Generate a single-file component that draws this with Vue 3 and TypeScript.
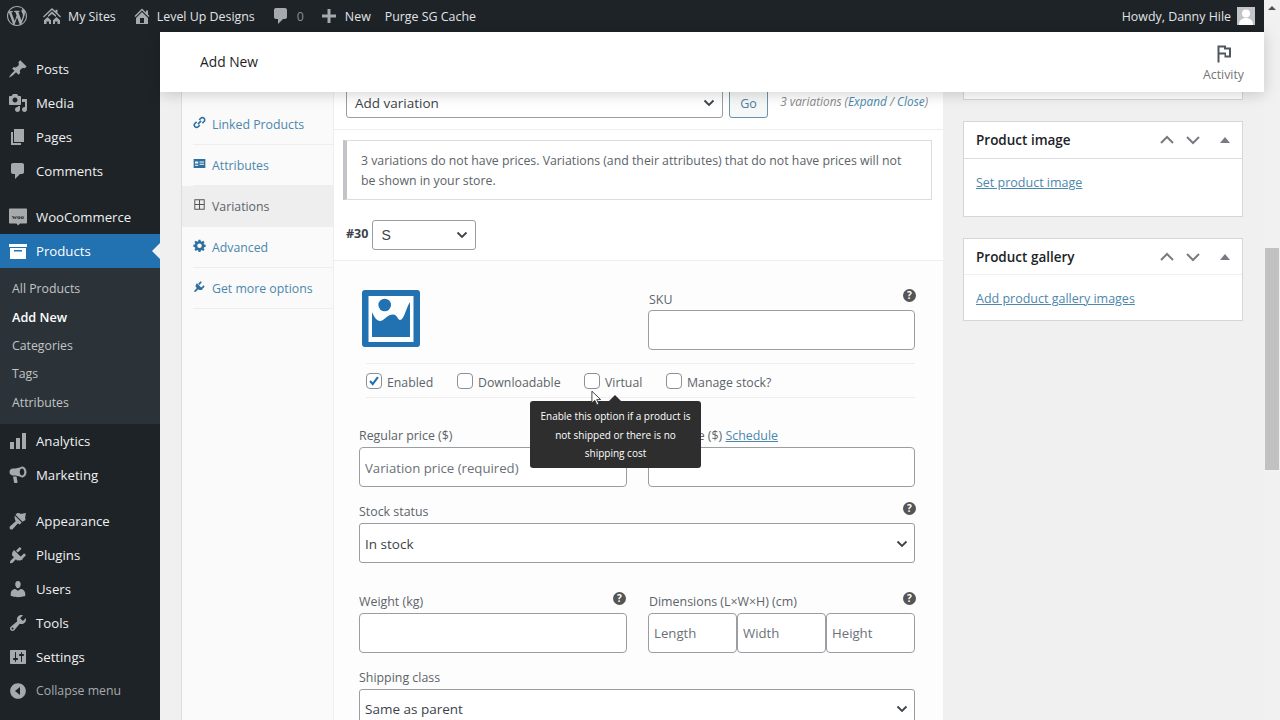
<template>
  <div class="screen">
    <div class="page">
      <!-- admin bar -->
      <header class="adminbar">
        <div class="bar-left">
          <svg class="wp-logo" viewBox="0 0 20 20"><path :d="icons.wp" /></svg>
          <span class="bar-item"><svg viewBox="0 0 20 20"><path :d="icons.sites" /></svg>My Sites</span>
          <span class="bar-item"><svg viewBox="0 0 20 20"><path :d="icons.home" /></svg>Level Up Designs</span>
          <span class="bar-item"><svg viewBox="0 0 20 20"><path :d="icons.comment" /></svg><span class="count">0</span></span>
          <span class="bar-item"><svg viewBox="0 0 20 20"><path :d="icons.plus" /></svg>New</span>
          <span class="bar-item">Purge SG Cache</span>
        </div>
        <div class="bar-right">
          Howdy, Danny Hile
          <span class="avatar">
            <svg viewBox="0 0 18 18"><rect width="18" height="18" fill="#c3c4c7" /><circle cx="9" cy="6.500" r="4" fill="#fff" /><path d="M2 18c0-5 3-7 7-7s7 2 7 7z" fill="#fff" /></svg>
          </span>
        </div>
      </header>

      <div class="below">
        <!-- side menu -->
        <nav class="sidemenu">
          <template v-for="item in menu" :key="item.label">
            <div class="menu-item" :class="{ current: item.current, gap: item.gap, muted: item.muted }">
              <svg v-if="item.icon !== 'woo'" viewBox="0 0 20 20"><path :d="icons[item.icon]" /></svg>
              <svg v-else viewBox="0 0 20 20">
                <path d="M2 1.500h16c.8 0 1 .5 1 1v13c0 .6-.4 1-1 1h-6l-2 2-1.500-2H2c-.6 0-1-.4-1-1v-13c0-.5.3-1 1-1z" />
                <text x="10" y="11.500" text-anchor="middle" class="woo-text">woo</text>
              </svg>
              {{ item.label }}
            </div>
            <div v-if="item.current" class="submenu">
              <div v-for="sub in submenu" :key="sub" class="sub-item" :class="{ on: sub === 'Add New' }">{{ sub }}</div>
            </div>
          </template>
        </nav>

        <main class="main">
          <div class="wc-header">
            <h1>Add New</h1>
            <div class="activity">
              <svg viewBox="0 0 20 20"><path d="M3.500 1.500h8.500v2h5v10h-6.500v-3H5.500v8h-2zM5.500 3.500v5h6.500v3h3v-6h-5v-2z" fill-rule="evenodd" /></svg>
              <span>Activity</span>
            </div>
          </div>

          <div class="content">
            <!-- product data panel -->
            <section class="panel">
              <ul class="tabs">
                <li v-for="tab in tabs" :key="tab.label" :class="{ active: tab.active }">
                  <svg viewBox="0 0 20 20"><path :d="tab.path" :class="{ outline: tab.outline }" /></svg>
                  {{ tab.label }}
                </li>
              </ul>

              <div class="panel-body">
                <div class="toolbar">
                  <div class="select add-var">
                    <span>Add variation</span>
                    <svg class="chev" viewBox="0 0 12 8"><path d="M1.500 1.500L6 6l4.500-4.500" /></svg>
                  </div>
                  <button class="go">Go</button>
                  <em class="var-count">3 variations (<a>Expand</a> / <a>Close</a>)</em>
                </div>

                <div class="notice">3 variations do not have prices. Variations (and their attributes) that do not have prices will not be shown in your store.</div>

                <div class="var-head">
                  <strong>#30</strong>
                  <div class="select size">
                    <span>S</span>
                    <svg class="chev" viewBox="0 0 12 8"><path d="M1.500 1.500L6 6l4.500-4.500" /></svg>
                  </div>
                </div>

                <div class="form">
                  <div class="cols top-row">
                    <svg class="placeholder" viewBox="0 0 58 57">
                      <rect width="58" height="57" rx="3" fill="#2271b1" />
                      <rect x="6.500" y="6" width="45" height="46" fill="#fff" />
                      <circle cx="22.700" cy="15" r="6.300" fill="#2271b1" />
                      <path d="M10 22c2 5 5 9 8 9 4 0 7-6.500 13-6.500 4 0 5 5.500 7 5.500 4 0 6-12 10-18v35H10z" fill="#2271b1" />
                    </svg>
                    <div class="field">
                      <label>SKU <i class="help">?</i></label>
                      <input type="text" />
                    </div>
                  </div>

                  <div class="options">
                    <label v-for="opt in options" :key="opt.label" class="check" :style="{ width: opt.width + 'px' }">
                      <span class="tick" :class="{ checked: opt.checked }">
                        <svg v-if="opt.checked" viewBox="0 0 16 16"><path d="M3.500 8l3 3.500 6-8" /></svg>
                      </span>
                      {{ opt.label }}
                    </label>
                  </div>

                  <div class="cols prices">
                    <div class="field">
                      <label>Regular price ($)</label>
                      <input type="text" placeholder="Variation price (required)" />
                    </div>
                    <div class="field">
                      <label><span>Sale price ($) <a class="link">Schedule</a></span></label>
                      <input type="text" />
                    </div>
                  </div>

                  <div class="field stock">
                    <label>Stock status <i class="help">?</i></label>
                    <div class="select wide">
                      <span>In stock</span>
                      <svg class="chev" viewBox="0 0 12 8"><path d="M1.500 1.500L6 6l4.500-4.500" /></svg>
                    </div>
                  </div>

                  <div class="cols weight">
                    <div class="field">
                      <label>Weight (kg) <i class="help">?</i></label>
                      <input type="text" />
                    </div>
                    <div class="field">
                      <label>Dimensions (L×W×H) (cm) <i class="help">?</i></label>
                      <div class="dims">
                        <input type="text" placeholder="Length" />
                        <input type="text" placeholder="Width" />
                        <input type="text" placeholder="Height" />
                      </div>
                    </div>
                  </div>

                  <div class="field shipping">
                    <label>Shipping class</label>
                    <div class="select wide">
                      <span>Same as parent</span>
                      <svg class="chev" viewBox="0 0 12 8"><path d="M1.500 1.500L6 6l4.500-4.500" /></svg>
                    </div>
                  </div>

                  <!-- tooltip over the Virtual checkbox -->
                  <div class="tooltip">Enable this option if a product is not shipped or there is no shipping cost</div>
                  <svg class="cursor" viewBox="0 0 12 18"><path d="M1 1v13l3.200-3 2.300 5 2-1-2.300-4.800H10.500z" /></svg>
                </div>
              </div>
            </section>

            <!-- right column -->
            <aside class="side">
              <div class="box stub"></div>
              <div v-for="b in boxes" :key="b.title" class="box" :class="b.cls">
                <div class="box-head">
                  <h2>{{ b.title }}</h2>
                  <svg class="ctl" viewBox="0 0 16 10"><path d="M2 8l6-6 6 6" /></svg>
                  <svg class="ctl" viewBox="0 0 16 10"><path d="M2 2l6 6 6-6" /></svg>
                  <span class="caret"></span>
                </div>
                <div class="box-body"><a class="link">{{ b.link }}</a></div>
              </div>
            </aside>
          </div>
        </main>
      </div>
    </div>

    <div class="scrollbar">
      <span class="up"></span>
      <div class="thumb"></div>
    </div>
  </div>
</template>

<script setup lang="ts">
const icons: Record<string, string> = {
  wp: 'M20 10c0-5.520-4.480-10-10-10S0 4.480 0 10s4.480 10 10 10 10-4.480 10-10zM7.780 15.370L4.370 6.220c.55-.02 1.170-.08 1.170-.08.5-.06.44-1.130-.06-1.110 0 0-1.450.11-2.370.11-.18 0-.37 0-.58-.01C4.120 2.690 6.900 1.040 10 1.040c2.330 0 4.450.87 6.050 2.340-.68-.11-1.650.39-1.650 1.550 0 .72.44 1.330.88 2.050.35.61.55 1.360.55 2.460 0 1.490-1.400 5-1.400 5l-3.030-8.370c.54-.02.82-.17.82-.17.5-.05.44-1.250-.06-1.220 0 0-1.440.12-2.380.12-.87 0-2.330-.12-2.330-.12-.5-.03-.56 1.200-.06 1.220l.92.08 1.260 3.410zM17.410 10c.24-.64.74-1.870.43-4.250.7 1.290 1.050 2.710 1.050 4.250 0 3.290-1.730 6.240-4.400 7.780.97-2.590 1.940-5.200 2.920-7.780zM6.100 18.090C3.120 16.650 1.110 13.530 1.110 10c0-1.300.23-2.480.72-3.590C3.250 10.300 4.670 14.200 6.100 18.090zm4.030-6.630l2.580 6.980c-.86.29-1.740.45-2.710.45-.82 0-1.620-.12-2.390-.35.84-2.370 1.680-4.730 2.520-7.080z',
  sites: 'M10 2l3.500 3.200V3.800h2v3.300L19 10.500l-.9 1-1.100-1-1-.9L10 4 4 9.600l-2.100 1.900-.9-1zM10 5.500l4 3.700V11l-4-3-4 3V9.200zM5.500 11l3.500 3.200V18H7v-2.500H4.500V18H2v-3.800zM14.500 11l3.500 3.200V18h-2.500v-2.500H13V18h-2v-3.800z',
  home: 'M16 8.500l1.530 1.530-1.060 1.060L10 4.620l-6.470 6.470-1.060-1.060L10 2.500l4 4v-2h2v4zm-6-2.460l6 5.990V18H4v-5.970zM12 17v-5H8v5h4z',
  comment: 'M5 2h9c1.100 0 2 .9 2 2v7c0 1.100-.9 2-2 2h-2l-5 5v-5H5c-1.100 0-2-.9-2-2V4c0-1.100.9-2 2-2z',
  plus: 'M8.500 3h3v5.500H17v3h-5.500V17h-3v-5.500H3v-3h5.500z',
  post: 'M10.440 3.020l1.820-1.820 6.360 6.350-1.830 1.820c-1.050-.68-2.480-.57-3.410.36l-.75.75c-.92.93-1.040 2.350-.35 3.410l-1.830 1.820-2.410-2.410-2.800 2.790c-.42.42-3.380 2.710-3.800 2.290s1.860-3.390 2.280-3.810l2.790-2.790L4.100 9.760l1.830-1.820c1.050.69 2.480.57 3.400-.36l.75-.75c.93-.92 1.050-2.350.36-3.410z',
  media: 'M13 11V4c0-.55-.45-1-1-1h-1.670L9 1H5L3.670 3H2c-.55 0-1 .45-1 1v7c0 .55.45 1 1 1h10c.55 0 1-.45 1-1zM7 4.500c1.380 0 2.500 1.120 2.500 2.500S8.380 9.500 7 9.500 4.500 8.380 4.500 7 5.620 4.500 7 4.500zM14 6h5v10.500c0 1.380-1.120 2.500-2.500 2.500S14 17.880 14 16.500s1.120-2.500 2.500-2.500c.17 0 .34.02.5.05V9h-3V6zm-4 8.050V13h2v3.500c0 1.380-1.120 2.500-2.500 2.500S7 17.880 7 16.500 8.120 14 9.500 14c.17 0 .34.02.5.05z',
  page: 'M6 15V2h10v13H6zm-1 1h8v2H3V5h2v11z',
  archive: 'M1 3h18v3H1zM2 7h16v11H2zM6 9v1.500h8V9z',
  analytics: 'M2 11h4v7H2zM8 7h4v11H8zM14 2h4v16h-4z',
  marketing: 'M14 1.500c2.500 0 4.500 2.500 4.500 5.500s-2 5.500-4.500 5.500c-3-1.500-6-2-9-2C3 10.500 1.500 9 1.500 7S3 3.500 5 3.500c3 0 6-.5 9-2zM14 3.500c-1.300 0-2.300 1.600-2.300 3.500s1 3.500 2.300 3.500 2.300-1.600 2.300-3.500-1-3.500-2.300-3.500zM5 11.500h3.500l1 5.500c0 .6-.5 1-1 1H7c-.5 0-1-.4-1-1z',
  brush: 'M14.500 10.800L7.500 3.800 9 2.300c1.200-.8 2.400.2 3.500.4 1.300.3 2.700-.3 5.500-.7-.5 1.500-.6 3.200-.8 4.500-.2 1.200.4 1.600.3 2.500zM6.700 4.600l7 7-1.900 1.900-2-1.100-5 5.500c-.8.8-2 .8-2.700.1s-.7-1.900 0-2.700l5.600-5-1-2.700z',
  plugin: 'M13.110 4.360L9.870 7.600 8 5.730l3.240-3.240c.35-.34 1.050-.2 1.560.32.52.51.66 1.210.31 1.550zm-8 1.770l.91-1.120 9.010 9.010-1.190.84c-.71.71-2.580 1.160-3.820.03l-.77.77-1.300-1.300-3.700 3.700-2.300.3.300-2.300 3.700-3.700-1.300-1.300c-1.130-1.150-.75-3.140.46-4.930zm12.400 4.540l-3.240 3.240-1.870-1.870 3.240-3.240c.34-.35 1.040-.21 1.550.31.52.51.66 1.210.32 1.560z',
  users: 'M10 9.250c-2.270 0-2.730-3.440-2.730-3.440C7 4.020 7.820 2 9.970 2c2.160 0 2.980 2.020 2.710 3.810 0 0-.41 3.440-2.680 3.440zm0 2.570L12.720 10c2.390 0 4.520 2.330 4.520 4.530v2.490s-3.650 1.130-7.240 1.130c-3.650 0-7.240-1.130-7.240-1.130v-2.490c0-2.250 1.940-4.480 4.470-4.480z',
  tools: 'M16.680 9.770c-1.340 1.340-3.300 1.670-4.950.99l-5.410 6.520c-.99.99-2.590.99-3.570 0s-.99-2.590 0-3.570l6.520-5.420c-.68-1.650-.35-3.610.99-4.950 1.280-1.280 3.120-1.620 4.720-1.060l-2.890 2.890 2.820 2.820 2.860-2.870c.53 1.580.18 3.400-1.090 4.670zM3.810 16.210c.4.390 1.040.39 1.430 0 .4-.4.4-1.040 0-1.430-.39-.4-1.030-.4-1.430 0-.39.39-.39 1.030 0 1.430z',
  settings: 'M18 16V4c0-.55-.45-1-1-1H3c-.55 0-1 .45-1 1v12c0 .55.45 1 1 1h14c.55 0 1-.45 1-1zM8 11h1c.55 0 1 .45 1 1s-.45 1-1 1H8v1.500c0 .28-.22.5-.5.5s-.5-.22-.5-.5V13H6c-.55 0-1-.45-1-1s.45-1 1-1h1V5.500c0-.28.22-.5.5-.5s.5.22.5.5V11zm5-2h-1c-.55 0-1-.45-1-1s.45-1 1-1h1V5.500c0-.28.22-.5.5-.5s.5.22.5.5V7h1c.55 0 1 .45 1 1s-.45 1-1 1h-1v5.500c0 .28-.22.5-.5.5s-.5-.22-.5-.5V9z',
  collapse: 'M10 2.160c4.330 0 7.840 3.510 7.840 7.840s-3.510 7.840-7.840 7.840S2.160 14.330 2.160 10 5.670 2.160 10 2.160zM12 14V6l-5 4z',
}

interface MenuItem {
  label: string
  icon: string
  gap?: boolean
  current?: boolean
  muted?: boolean
}

const menu: MenuItem[] = [
  { label: 'Posts', icon: 'post' },
  { label: 'Media', icon: 'media' },
  { label: 'Pages', icon: 'page' },
  { label: 'Comments', icon: 'comment' },
  { label: 'WooCommerce', icon: 'woo', gap: true },
  { label: 'Products', icon: 'archive', current: true },
  { label: 'Analytics', icon: 'analytics' },
  { label: 'Marketing', icon: 'marketing' },
  { label: 'Appearance', icon: 'brush', gap: true },
  { label: 'Plugins', icon: 'plugin' },
  { label: 'Users', icon: 'users' },
  { label: 'Tools', icon: 'tools' },
  { label: 'Settings', icon: 'settings' },
  { label: 'Collapse menu', icon: 'collapse', muted: true },
]

const submenu = ['All Products', 'Add New', 'Categories', 'Tags', 'Attributes']

const tabs = [
  { label: 'Linked Products', outline: true, path: 'M9.500 6l2.500-2.500a3.500 3.500 0 0 1 5 5L14.500 11M10.500 14L8 16.500a3.500 3.500 0 0 1-5-5L5.500 9M7.500 12.500l5-5' },
  { label: 'Attributes', path: 'M1 3h18v14H1zM3 7v3h5V7zM3 12v1.500h5V12zM10 7v1.500h7V7zM10 10.500V12h7v-1.500z' },
  { label: 'Variations', active: true, path: 'M2 2h16v16H2zM3.500 3.500v5.700h5.700V3.500zM10.800 3.500v5.700h5.700V3.500zM3.500 10.800v5.700h5.700v-5.700zM10.800 10.800v5.700h5.700v-5.700z' },
  { label: 'Advanced', path: 'M8.500 1h3l.5 2.500 1.600.7 2.100-1.400 2.100 2.100-1.400 2.100.7 1.600 2.400.4v3l-2.400.5-.7 1.600 1.400 2.100-2.100 2.100-2.100-1.400-1.600.7-.5 2.400h-3L8 17.600l-1.600-.7-2.100 1.400-2.100-2.100 1.400-2.100-.7-1.600L.5 12V9l2.400-.5.7-1.600-1.400-2.100 2.100-2.100 2.100 1.400L8 3.500zM10 7a3.500 3.500 0 1 0 0 7 3.500 3.500 0 0 0 0-7z' },
  { label: 'Get more options', path: icons.plugin },
]

const options = [
  { label: 'Enabled', checked: true, width: 91 },
  { label: 'Downloadable', width: 127 },
  { label: 'Virtual', width: 82 },
  { label: 'Manage stock?', width: 130 },
]

const boxes = [
  { title: 'Product image', link: 'Set product image', cls: 'image' },
  { title: 'Product gallery', link: 'Add product gallery images', cls: 'gallery' },
]
</script>

<style>
html,
body {
  margin: 0;
  height: 720px;
  overflow: hidden;
  background: #f0f0f1;
}
</style>

<style scoped>
.screen {
  display: flex;
  width: 1280px;
  height: 720px;
  overflow: hidden;
  font-family: "Open Sans", "Noto Sans", sans-serif;
  font-size: 13px;
  color: #3c434a;
}
.page {
  flex: 1;
  min-width: 0;
  display: flex;
  flex-direction: column;
}

/* admin bar */
.adminbar {
  height: 32px;
  flex: none;
  display: flex;
  justify-content: space-between;
  align-items: center;
  background: #1d2327;
  color: #e2e4e6;
  font-size: 12.400px;
}
.bar-left {
  display: flex;
  align-items: center;
}
.wp-logo {
  width: 20px;
  height: 20px;
  margin-left: 7px;
  fill: #a7aaad;
}
.bar-item {
  display: flex;
  align-items: center;
  gap: 6px;
}
.bar-item svg {
  width: 20px;
  height: 20px;
  fill: #a7aaad;
}
.bar-item:nth-child(2) {
  margin-left: 15px;
}
.bar-item:nth-child(3) {
  margin-left: 16px;
}
.bar-item:nth-child(3) svg {
  margin-right: -1px;
}
.bar-item:nth-child(4) {
  margin-left: 16px;
}
.bar-item:nth-child(5) {
  margin-left: 15px;
}
.bar-item:nth-child(6) {
  margin-left: 14px;
}
.count {
  color: #8c8f94;
}
.bar-right {
  display: flex;
  align-items: center;
  gap: 6px;
  margin-right: 9px;
}
.avatar {
  width: 18px;
  height: 18px;
  display: block;
}
.avatar svg {
  display: block;
}

.below {
  flex: 1;
  min-height: 0;
  display: flex;
}

/* side menu */
.sidemenu {
  width: 160px;
  flex: none;
  padding-top: 20px;
  background: #1d2327;
  color: #f0f0f1;
  font-size: 13.200px;
}
.menu-item {
  position: relative;
  height: 34px;
  display: flex;
  align-items: center;
  gap: 8px;
  padding-left: 8px;
}
.menu-item svg {
  width: 20px;
  height: 20px;
  fill: #a7aaad;
}
.menu-item.gap {
  margin-top: 12px;
}
.menu-item.current {
  background: #2271b1;
  color: #fff;
}
.menu-item.current svg {
  fill: #fff;
}
.menu-item.current::after {
  content: "";
  position: absolute;
  right: 0;
  top: 9px;
  border: 8px solid transparent;
  border-right-color: #f0f0f1;
  border-left: 0;
}
.menu-item.muted {
  color: #a7aaad;
  font-size: 12.300px;
}
.woo-text {
  font-family: "Liberation Serif", serif;
  font-size: 7px;
  font-weight: 700;
  fill: #1d2327;
}
.submenu {
  padding: 7px 0;
  background: #2c3338;
  color: #c3c4c7;
  font-size: 12.300px;
}
.sub-item {
  height: 28.400px;
  line-height: 28.400px;
  padding-left: 12px;
}
.sub-item.on {
  color: #fff;
  font-weight: 600;
  font-size: 12.700px;
}

.main {
  flex: 1;
  min-width: 0;
  display: flex;
  flex-direction: column;
}
.wc-header {
  position: relative;
  z-index: 2;
  height: 60px;
  flex: none;
  display: flex;
  justify-content: space-between;
  align-items: center;
  padding: 0 20px 0 40px;
  background: #fff;
  box-shadow: 0 2px 14px rgba(0, 0, 0, 0.18);
}
.wc-header h1 {
  margin: -1px 0 0;
  font-size: 13.800px;
  font-weight: 500;
  color: #1e1e1e;
}
.activity {
  display: flex;
  flex-direction: column;
  align-items: center;
  gap: 2px;
  padding-top: 2px;
  font-size: 12.300px;
  color: #757575;
}
.activity svg {
  width: 20px;
  height: 20px;
  fill: #50575e;
}

/* the page is scrolled, its top runs under the header */
.content {
  flex: 1;
  min-height: 0;
  margin-top: -30px;
  display: flex;
  gap: 20px;
  padding: 0 21px;
  overflow: hidden;
}

.panel {
  width: 762px;
  flex: none;
  display: flex;
  box-sizing: border-box;
  border-left: 1px solid #dcdcde;
  background: #fff;
}
.tabs {
  width: 152px;
  flex: none;
  box-sizing: border-box;
  margin: 0;
  padding: 42px 0 0;
  list-style: none;
  background: #fafafa;
  border-right: 1px solid #eee;
  font-size: 12.300px;
  color: #4b88ad;
}
.tabs li {
  position: relative;
  height: 41px;
  box-sizing: border-box;
  display: flex;
  align-items: center;
  gap: 6px;
  padding-left: 11px;
}
.tabs li::after {
  content: "";
  position: absolute;
  left: 11px;
  right: 0;
  bottom: 0;
  border-bottom: 1px solid #eee;
}
.tabs li.active {
  background: #eee;
  color: #5c6369;
}
.tabs svg {
  width: 13px;
  height: 13px;
  margin-top: -4px;
  fill: #2d6f9f;
}
.tabs svg .outline {
  fill: none;
  stroke: #2d6f9f;
  stroke-width: 2.400;
}
.tabs li.active svg {
  fill: #555;
}

.panel-body {
  flex: 1;
  min-width: 0;
}
.toolbar {
  height: 68px;
  box-sizing: border-box;
  padding: 16px 15px 0 12px;
  display: flex;
  align-items: flex-start;
  border-bottom: 1px solid #eee;
}
.select {
  box-sizing: border-box;
  display: flex;
  justify-content: space-between;
  align-items: center;
  height: 40px;
  padding: 1px 7px 0 8px;
  border: 1px solid #9a9da1;
  border-radius: 3px;
  background: #fff;
  font-size: 13.500px;
  color: #3c434a;
}
.chev {
  width: 12px;
  height: 8px;
  fill: none;
  stroke: #3c434a;
  stroke-width: 1.800;
}
.add-var {
  width: 377px;
  height: 30px;
  margin-top: 10px;
  flex: none;
  padding-top: 0;
}
.go {
  box-sizing: border-box;
  width: 39px;
  height: 30px;
  flex: none;
  margin: 10px 0 0 6px;
  padding: 1px 0 0;
  border: 1px solid #6a93ae;
  border-radius: 3px;
  background: #f6f7f7;
  color: #4f7fa0;
  font-family: inherit;
  font-size: 12.500px;
}
.var-count {
  margin: 14px 0 0 auto;
  font-size: 11.800px;
  line-height: 18px;
  color: #888;
}
.var-count a {
  color: #4b88ad;
}
.notice {
  box-sizing: border-box;
  height: 60px;
  margin: 10px 11px 0 9px;
  padding: 10px 14px;
  border: 1px solid #dcdcde;
  border-left: 4px solid #c3c4c7;
  font-size: 12.300px;
  line-height: 20px;
  color: #5c6369;
}
.var-head {
  height: 61px;
  box-sizing: border-box;
  padding: 20px 0 0 12px;
  display: flex;
  align-items: flex-start;
  gap: 4px;
  border-bottom: 1px solid #eee;
}
.var-head strong {
  font-size: 12.500px;
  line-height: 28px;
  color: #3c434a;
}
.size {
  width: 104px;
  height: 30px;
  padding-top: 0;
  font-family: "Liberation Sans", sans-serif;
  font-size: 14px;
}
.form {
  position: relative;
  padding: 0 28px 0 25px;
  background: #fdfdfd;
}
.cols {
  display: grid;
  grid-template-columns: 268px 267px;
  gap: 21px;
}
.cols .field + .field label {
  padding-left: 1px;
}
.top-row {
  height: 103px;
  box-sizing: border-box;
  padding-top: 29px;
  border-bottom: 1px solid #eee;
  margin-left: 7px;
  grid-template-columns: 261px 267px;
}
.top-row .field label {
  margin-bottom: 2px;
  padding-left: 1px;
}
.top-row .help {
  margin-top: -1px;
}
.placeholder {
  width: 58px;
  height: 57px;
  margin-left: -4px;
}
.field label {
  display: flex;
  justify-content: space-between;
  align-items: flex-start;
  height: 18px;
  margin-bottom: 3px;
  font-size: 12.400px;
  line-height: 20px;
  color: #5c6369;
}
input[type="text"] {
  display: block;
  width: 100%;
  height: 40px;
  box-sizing: border-box;
  padding: 1px 5px 0;
  border: 1px solid #9a9da1;
  border-radius: 4px;
  background: #fff;
  font-family: inherit;
  font-size: 13.200px;
  outline: none;
}
input::placeholder {
  color: #6b7177;
  opacity: 1;
}
.help {
  flex: none;
  width: 13px;
  height: 13px;
  margin-right: -1px;
  border-radius: 50%;
  background: #555;
  color: #fff;
  font-size: 10px;
  font-style: normal;
  font-weight: 700;
  line-height: 13px;
  text-align: center;
}
.weight .field:first-child .help {
  margin-right: 1px;
}
.options {
  height: 34px;
  box-sizing: border-box;
  display: flex;
  align-items: center;
  margin-left: 7px;
  padding-top: 3px;
  border-bottom: 1px solid #eee;
  font-size: 12.300px;
  color: #5c6369;
}
.check {
  display: flex;
  align-items: center;
  gap: 5px;
}
.tick {
  box-sizing: border-box;
  width: 16px;
  height: 16px;
  border: 1px solid #8c8f94;
  border-radius: 4px;
  background: #fff;
  margin-top: -2px;
}
.tick svg {
  display: block;
  width: 14px;
  height: 14px;
  fill: none;
  stroke: #2271b1;
  stroke-width: 2.400;
}
.prices {
  margin-top: 28px;
}
.link {
  color: #4b88ad;
  text-decoration: underline;
}
.stock {
  margin-top: 15px;
}
.wide {
  padding-left: 5px;
  padding-right: 6px;
}
.weight {
  margin-top: 29px;
}
.dims {
  display: flex;
}
.dims input[type="text"] {
  flex: 1;
  min-width: 0;
  padding-top: 0;
}
.shipping {
  margin-top: 15px;
}
.shipping .select {
  padding-top: 0;
}
.tooltip {
  position: absolute;
  left: 196px;
  top: 140px;
  width: 171px;
  height: 67px;
  box-sizing: border-box;
  padding: 6px 6px;
  border-radius: 3px;
  background: #2e2e2e;
  color: #fff;
  font-size: 10px;
  line-height: 18.500px;
  text-align: center;
}
.tooltip::before {
  content: "";
  position: absolute;
  left: 79px;
  top: -6px;
  border: 6px solid transparent;
  border-top: 0;
  border-bottom-color: #2e2e2e;
}
.cursor {
  position: absolute;
  left: 257px;
  top: 129px;
  width: 11px;
  height: 17px;
  fill: #fff;
  stroke: #333;
  stroke-width: 1;
}

/* right column */
.side {
  width: 280px;
  flex: none;
}
.box {
  margin-bottom: 21px;
  border: 1px solid #d5d6d8;
  background: #fff;
  box-sizing: border-box;
}
.box.stub {
  height: 38px;
  border-top: 0;
}
.box-head {
  height: 36px;
  display: flex;
  align-items: center;
  gap: 10px;
  padding: 0 12px;
  border-bottom: 1px solid #dcdcde;
}
.gallery .box-head {
  height: 35px;
  border-bottom-color: #f0f0f1;
}
.box-head h2 {
  flex: 1;
  margin: 0;
  font-size: 13.500px;
  font-weight: 600;
  color: #1d2327;
}
.ctl {
  width: 16px;
  height: 10px;
  fill: none;
  stroke: #787c82;
  stroke-width: 2;
}
.caret {
  margin-left: 9px;
  border: 5px solid transparent;
  border-top: 0;
  border-bottom: 6px solid #787c82;
}
.box-body {
  padding: 15px 12px 0;
  box-sizing: border-box;
  font-size: 12.500px;
  line-height: 18px;
}
.image .box-body {
  height: 57px;
}
.gallery .box-body {
  height: 45px;
}

.scrollbar {
  width: 16px;
  flex: none;
  position: relative;
  background: #f1f1f1;
  display: flex;
  flex-direction: column;
  align-items: center;
}
.up {
  margin-top: 6px;
  border: 4px solid transparent;
  border-top: 0;
  border-bottom: 4px solid #505050;
}
.thumb {
  width: 14px;
  height: 222px;
  margin-top: 238px;
  background: #c1c1c1;
}
</style>
